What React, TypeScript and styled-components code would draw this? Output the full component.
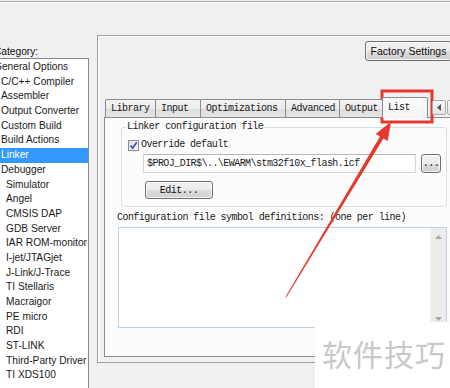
import React from 'react';
import styled, { createGlobalStyle } from 'styled-components';

const ui = `"Liberation Sans", Arial, sans-serif`;
const mono = `"Liberation Mono", "Courier New", monospace`;

const GlobalStyle = createGlobalStyle`
    html, body {
        margin: 0;
        padding: 0;
        background: #f0f0f0;
    }
    body {
        width: 450px;
        height: 388px;
        overflow: hidden;
    }
`;

const StyledWindow = styled.div`
    position: relative;
    width: 450px;
    height: 388px;
    overflow: hidden;
    background: #f0f0f0;
    font-family: ${ui};
    color: #111;
`;

const StyledTopRule = styled.div`
    height: 1px;
    margin-top: 1px;
    background: #a5a5a5;
    border-bottom: 1px solid #fbfbfb;
`;

const StyledBody = styled.div`
    display: flex;
    align-items: flex-start;
`;

const StyledLeftColumn = styled.div`
    flex: none;
    width: 97px;
    margin-left: -8px;
    display: flex;
    flex-direction: column;
`;

const StyledCategoryLabel = styled.div`
    height: 12px;
    margin-top: 43px;
    padding-left: 2px;
    font-size: 10.2px;
    line-height: 12px;
`;

const StyledCategoryList = styled.div`
    height: 340px;
    padding-top: 1px;
    border: 1px solid #828790;
    background: #fff;
`;

const StyledCategoryItem = styled.div<{ $level: number; $selected?: boolean }>`
    height: 14.7px;
    line-height: 14.7px;
    padding-left: ${p => (p.$level === 0 ? 1 : p.$level === 1 ? 8 : 13)}px;
    font-size: 10.2px;
    white-space: nowrap;
    background: ${p => (p.$selected ? '#3399ff' : 'transparent')};
    color: ${p => (p.$selected ? '#fff' : '#1a1a1a')};
`;

const StyledPanel = styled.div`
    flex: none;
    box-sizing: border-box;
    width: 372px;
    height: 328px;
    margin: 32px 0 0 8px;
    padding: 5px 0 0 6px;
    border: 1px solid #a0a0a0;
    box-shadow: inset 1px 1px 0 #fff;
    display: flex;
    flex-direction: column;
`;

const StyledButtonRow = styled.div`
    display: flex;
    height: 20px;
    padding-left: 261px;
`;

const StyledButton = styled.button<{ $w: number; $h: number; $mono?: boolean }>`
    box-sizing: border-box;
    flex: none;
    width: ${p => p.$w}px;
    height: ${p => p.$h}px;
    padding: 0;
    border: 1px solid #707070;
    border-radius: 3px;
    background: linear-gradient(#f2f2f2 0%, #ebebeb 50%, #dddddd 51%, #cfcfcf 100%);
    box-shadow: inset 0 0 0 1px rgba(255, 255, 255, 0.75);
    font-family: ${p => (p.$mono ? mono : ui)};
    font-size: ${p => (p.$mono ? '10px' : '10.5px')};
    letter-spacing: ${p => (p.$mono ? '-0.5px' : '0')};
    color: #111;
`;

const StyledTabStrip = styled.div`
    position: relative;
    z-index: 1;
    display: flex;
    align-items: flex-end;
    height: 20px;
    margin: 36px 0 0 2px;
`;

const StyledTab = styled.div<{ $w: number; $active?: boolean }>`
    box-sizing: border-box;
    flex: none;
    width: ${p => p.$w}px;
    height: ${p => (p.$active ? 21 : 18)}px;
    margin-left: -1px;
    margin-bottom: ${p => (p.$active ? -1 : 0)}px;
    padding-left: 5px;
    border: 1px solid #898c95;
    border-bottom: none;
    border-radius: 2px 2px 0 0;
    background: ${p =>
        p.$active
            ? 'linear-gradient(#fbfbfb, #f3f3f3)'
            : 'linear-gradient(#f3f3f3 0%, #ebebeb 50%, #dddddd 51%, #e6e6e6 100%)'};
    font-family: ${mono};
    font-size: 10px;
    letter-spacing: -0.5px;
    line-height: ${p => (p.$active ? 20 : 17)}px;
    white-space: nowrap;
    color: #1a1a1a;
`;

const StyledTabScroll = styled.div<{ $gap: number }>`
    box-sizing: border-box;
    flex: none;
    align-self: flex-start;
    width: 14px;
    height: 15px;
    margin: 3px 0 0 ${p => p.$gap}px;
    border: 1px solid #a9abb0;
    border-radius: 2px;
    background: linear-gradient(#f7f7f7, #e4e4e4);
    display: flex;
    align-items: center;
    justify-content: center;
`;

const StyledTabPage = styled.div`
    box-sizing: border-box;
    flex: none;
    width: 366px;
    height: 240px;
    padding-left: 13px;
    border: 1px solid #898c95;
    background: #fcfcfc;
    display: flex;
    flex-direction: column;
    align-items: flex-start;
    font-family: ${mono};
    font-size: 10px;
    letter-spacing: -0.55px;
    color: #1a1a1a;
`;

const StyledGroup = styled.fieldset`
    box-sizing: border-box;
    width: 326px;
    min-inline-size: 0;
    margin: 3px 0 0 3px;
    padding: 0 0 7px 6px;
    border: 1px solid #d5dfe5;
    border-radius: 3px;
`;

const StyledLegend = styled.legend`
    margin-left: -2px;
    padding: 0 1px;
    line-height: 12px;
`;

const StyledCheckRow = styled.div`
    display: flex;
    align-items: center;
    gap: 2px;
    height: 12px;
    margin-top: 6px;
    line-height: 12px;
`;

const StyledCheckbox = styled.div`
    box-sizing: border-box;
    width: 11px;
    height: 11px;
    border: 1px solid #8f8f8f;
    background: linear-gradient(135deg, #dedede, #fdfdfd);
    display: flex;
    align-items: center;
    justify-content: center;
`;

const StyledPathRow = styled.div`
    display: flex;
    gap: 5px;
    margin-top: 3px;
    padding-left: 15px;
`;

const StyledPathInput = styled.div`
    box-sizing: border-box;
    width: 273px;
    height: 19px;
    padding-left: 3px;
    border: 1px solid #d3d6da;
    border-top-color: #b4b7bc;
    background: #fff;
    line-height: 17px;
    white-space: nowrap;
`;

const StyledEditButton = styled(StyledButton)`
    display: block;
    margin: 8px 0 0 17px;
`;

const StyledConfigLabel = styled.div`
    margin: 5px 0 0 -1px;
    line-height: 12px;
    white-space: nowrap;
`;

const StyledTextArea = styled.div`
    box-sizing: border-box;
    width: 329px;
    height: 101px;
    margin-top: 3px;
    border: 1px solid #bcd4e6;
    background: #fff;
    display: flex;
    justify-content: flex-end;
`;

const StyledScrollbar = styled.div`
    width: 15px;
    background: #ececec;
    border-left: 1px solid #f6f6f6;
    display: flex;
    flex-direction: column;
    justify-content: space-between;
    align-items: center;
    padding: 7px 0 6px;
`;

const StyledWatermark = styled.div`
    position: absolute;
    left: 315px;
    top: 322px;
    width: 135px;
    height: 66px;
    padding-left: 7px;
    box-sizing: border-box;
    background: #fff;
    font-family: "Noto Sans CJK SC", sans-serif;
    font-size: 30px;
    letter-spacing: 1px;
    line-height: 62px;
    color: #c8c8c8;
    white-space: nowrap;
`;

const StyledAnnotation = styled.svg`
    position: absolute;
    left: 0;
    top: 0;
    pointer-events: none;
`;

const categories: [string, number][] = [
    ['General Options', 0],
    ['C/C++ Compiler', 1],
    ['Assembler', 1],
    ['Output Converter', 1],
    ['Custom Build', 1],
    ['Build Actions', 1],
    ['Linker', 1],
    ['Debugger', 1],
    ['Simulator', 2],
    ['Angel', 2],
    ['CMSIS DAP', 2],
    ['GDB Server', 2],
    ['IAR ROM-monitor', 2],
    ['I-jet/JTAGjet', 2],
    ['J-Link/J-Trace', 2],
    ['TI Stellaris', 2],
    ['Macraigor', 2],
    ['PE micro', 2],
    ['RDI', 2],
    ['ST-LINK', 2],
    ['Third-Party Driver', 2],
    ['TI XDS100', 2],
];

const tabs: [string, number][] = [
    ['Library', 51],
    ['Input', 46],
    ['Optimizations', 86],
    ['Advanced', 55],
    ['Output', 44],
    ['List', 46],
];

const Arrow = ({ dir }: { dir: 'up' | 'down' | 'left' }) => {
    const pts = dir === 'up' ? '0,4 3.5,0 7,4' : dir === 'down' ? '0,0 3.5,4 7,0' : '4,0 0,3.5 4,7';
    const w = dir === 'left' ? 4 : 7;
    const h = dir === 'left' ? 7 : 4;
    return (
        <svg width={w} height={h} viewBox={`0 0 ${w} ${h}`}>
            <polygon points={pts} fill={dir === 'left' ? '#555' : '#a8a8a8'} />
        </svg>
    );
};

const App = () => {
    return (
        <StyledWindow>
            <GlobalStyle />
            <StyledTopRule />
            <StyledBody>
                <StyledLeftColumn>
                    <StyledCategoryLabel>Category:</StyledCategoryLabel>
                    <StyledCategoryList>
                        {categories.map(([name, level]) => (
                            <StyledCategoryItem key={name} $level={level} $selected={name === 'Linker'}>
                                {name}
                            </StyledCategoryItem>
                        ))}
                    </StyledCategoryList>
                </StyledLeftColumn>

                <StyledPanel>
                    <StyledButtonRow>
                        <StyledButton $w={87} $h={20}>Factory Settings</StyledButton>
                    </StyledButtonRow>
                    <StyledTabStrip>
                        {tabs.map(([name, w]) => (
                            <StyledTab key={name} $w={w} $active={name === 'List'}>
                                {name}
                            </StyledTab>
                        ))}
                        <StyledTabScroll $gap={4}>
                            <Arrow dir="left" />
                        </StyledTabScroll>
                        <StyledTabScroll $gap={1} />
                    </StyledTabStrip>
                    <StyledTabPage>
                        <StyledGroup>
                            <StyledLegend>Linker configuration file</StyledLegend>
                            <StyledCheckRow>
                                <StyledCheckbox>
                                    <svg width="9" height="9" viewBox="0 0 9 9">
                                        <path d="M1.5 4.5 L3.6 7 L7.8 1.2" fill="none" stroke="#3d55b8" strokeWidth="1.7" />
                                    </svg>
                                </StyledCheckbox>
                                Override default
                            </StyledCheckRow>
                            <StyledPathRow>
                                <StyledPathInput>$PROJ_DIR$\..\EWARM\stm32f10x_flash.icf</StyledPathInput>
                                <StyledButton $w={20} $h={19} $mono>...</StyledButton>
                            </StyledPathRow>
                            <StyledEditButton $w={68} $h={18} $mono>Edit...</StyledEditButton>
                        </StyledGroup>
                        <StyledConfigLabel>Configuration file symbol definitions: (one per line)</StyledConfigLabel>
                        <StyledTextArea>
                            <StyledScrollbar>
                                <Arrow dir="up" />
                                <Arrow dir="down" />
                            </StyledScrollbar>
                        </StyledTextArea>
                    </StyledTabPage>
                </StyledPanel>
            </StyledBody>

            <StyledAnnotation width="450" height="388" viewBox="0 0 450 388">
                <rect x="382" y="91" width="50" height="31" fill="none" stroke="#e5392f" strokeWidth="3" />
                <polygon
                    points="391,122 387.7,141 383.4,138.4 286.4,297.3 285.6,296.7 380,136.4 375.7,133.8"
                    fill="#e5392f"
                />
            </StyledAnnotation>
            <StyledWatermark>软件技巧</StyledWatermark>
        </StyledWindow>
    );
};

export default App;
